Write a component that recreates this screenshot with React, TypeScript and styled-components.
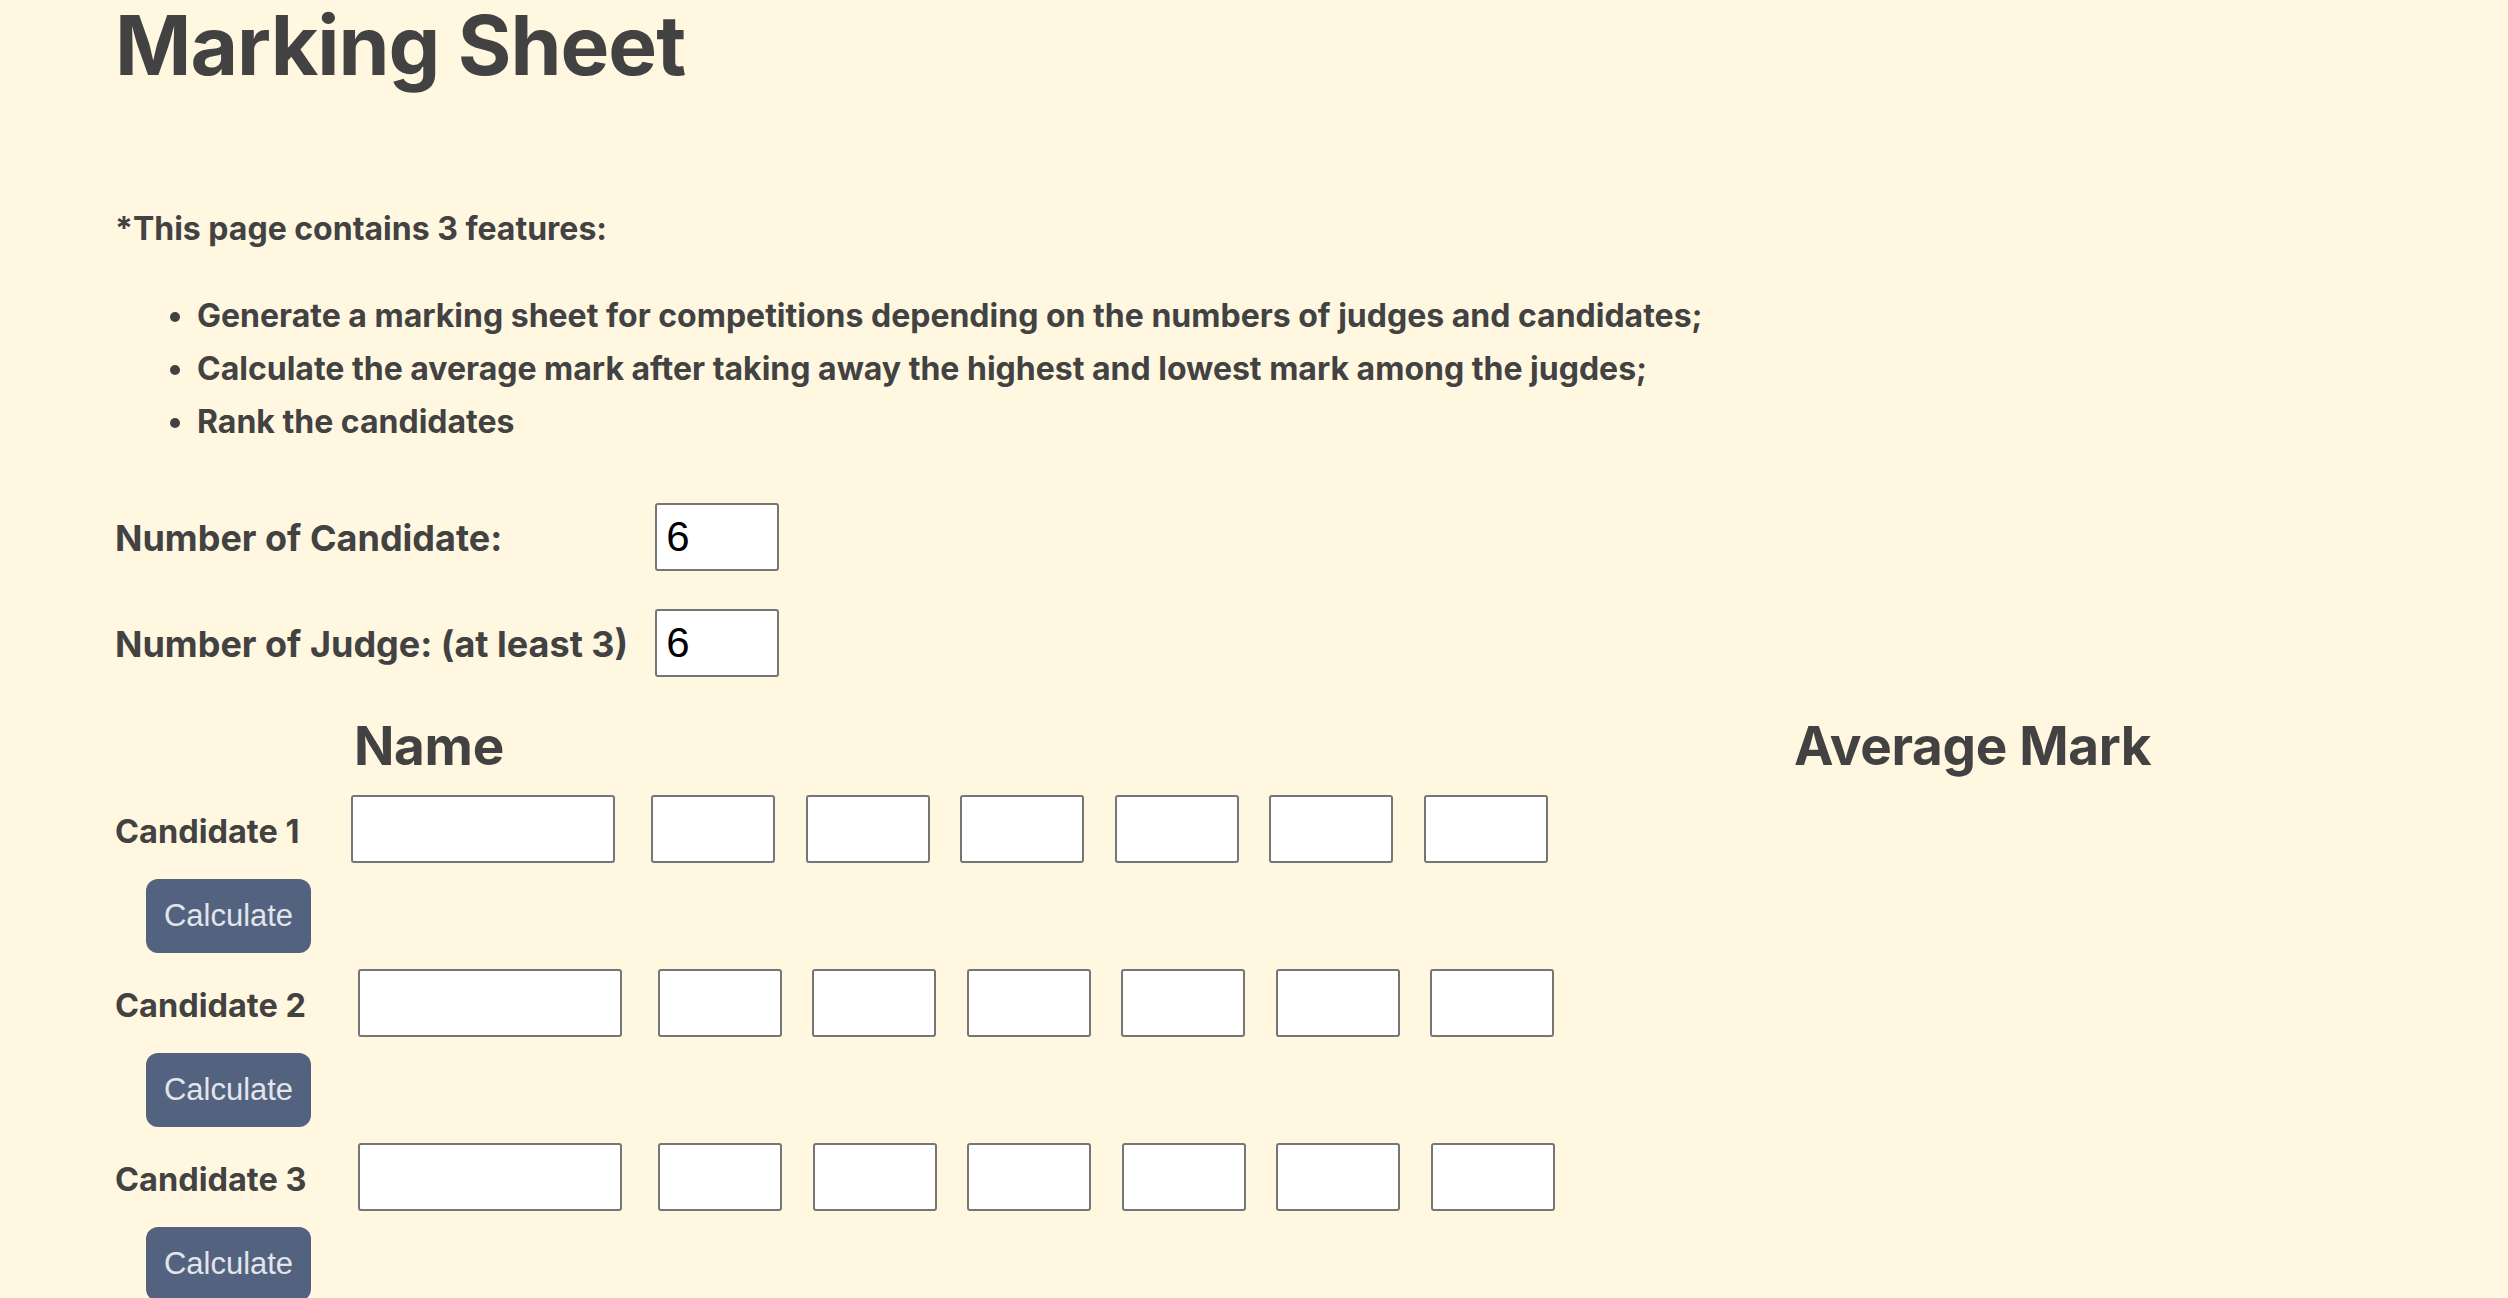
import React from "react";
import styled, { createGlobalStyle } from "styled-components";

const GlobalStyle = createGlobalStyle`
  html, body {
    margin: 0;
    padding: 0;
    background: #fff7e0;
    overflow: hidden;
  }
  body {
    font-family: Inter, "Noto Sans", sans-serif;
    color: #424242;
  }
  * { box-sizing: border-box; }
`;

const Page = styled.main`
  padding: 0 0 0 115px;
  min-height: 1298px;
`;

const Title = styled.h1`
  margin: 0;
  padding-top: 5px;
  font-size: 82px;
  line-height: 82px;
  font-weight: 700;
  letter-spacing: -1px;
`;

const Intro = styled.p`
  margin: 118px 0 0;
  font-size: 32px;
  line-height: 48px;
  font-weight: 700;
`;

const FeatureList = styled.ul`
  margin: 36px 0 0;
  padding-left: 82px;
  font-size: 32px;
  line-height: 53px;
  font-weight: 700;
  list-style: disc outside;
`;

const Settings = styled.div`
  margin-top: 55px;
  display: grid;
  grid-template-columns: max-content 124px;
  column-gap: 27px;
  row-gap: 38px;
  align-items: center;
`;

const SettingLabel = styled.label`
  font-size: 36px;
  font-weight: 700;
  padding-top: 2px;
`;

const BaseInput = styled.input`
  height: 68px;
  background: #ffffff;
  border: 2px solid #767676;
  border-radius: 3px;
  font-family: "Liberation Sans", Arial, sans-serif;
  font-size: 42px;
  color: #000;
  padding: 0 9px;
  margin: 0;
  outline: none;
`;

const CountInput = styled(BaseInput)`
  width: 124px;
`;

const HeaderRow = styled.div`
  margin-top: 37px;
  display: flex;
  padding-left: 239px;
  font-size: 53px;
  line-height: 64px;
  font-weight: 700;
  letter-spacing: -0.3px;
`;

const HeaderCell = styled.div<{ $width?: number }>`
  width: ${(p) => (p.$width ? `${p.$width}px` : "auto")};
  flex: none;
`;

const CandidateBlock = styled.section`
  margin-top: 17px;
  & + & {
    margin-top: 0;
  }
`;

const CandidateRow = styled.div`
  display: flex;
  align-items: center;
`;

const CandidateLabel = styled.span`
  font-size: 32.5px;
  font-weight: 700;
  margin-right: 52px;
  padding-top: 4px;
`;

const NameInput = styled(BaseInput)`
  width: 264px;
  margin-right: 36px;
`;

const ScoreInput = styled(BaseInput)`
  width: 124px;
  & + & {
    margin-left: 30.5px;
  }
`;

const CalcButton = styled.button`
  display: block;
  margin: 16px 0 16px 31px;
  width: 165px;
  height: 74px;
  border: none;
  border-radius: 12px;
  background: #52627f;
  color: #e2e5ea;
  font-family: "Liberation Sans", Arial, sans-serif;
  font-size: 31px;
  padding: 0;
  cursor: pointer;
`;

const features = [
  "Generate a marking sheet for competitions depending on the numbers of judges and candidates;",
  "Calculate the average mark after taking away the highest and lowest mark among the jugdes;",
  "Rank the candidates",
];

export default function App() {
  const candidates = 6;
  const judges = 6;
  return (
    <>
      <GlobalStyle />
      <Page>
        <Title>Marking Sheet</Title>
        <Intro>*This page contains 3 features:</Intro>
        <FeatureList>
          {features.map((f) => (
            <li key={f}>{f}</li>
          ))}
        </FeatureList>
        <Settings>
          <SettingLabel>Number of Candidate:</SettingLabel>
          <CountInput type="text" defaultValue="6" />
          <SettingLabel>Number of Judge: (at least 3)</SettingLabel>
          <CountInput type="text" defaultValue="6" />
        </Settings>
        <HeaderRow>
          <HeaderCell $width={1440}>Name</HeaderCell>
          <HeaderCell>Average Mark</HeaderCell>
        </HeaderRow>
        {Array.from({ length: candidates }, (_, i) => (
          <CandidateBlock key={i}>
            <CandidateRow>
              <CandidateLabel>Candidate {i + 1}</CandidateLabel>
              <NameInput type="text" />
              {Array.from({ length: judges }, (_, j) => (
                <ScoreInput key={j} type="text" />
              ))}
            </CandidateRow>
            <CalcButton type="button">Calculate</CalcButton>
          </CandidateBlock>
        ))}
      </Page>
    </>
  );
}
